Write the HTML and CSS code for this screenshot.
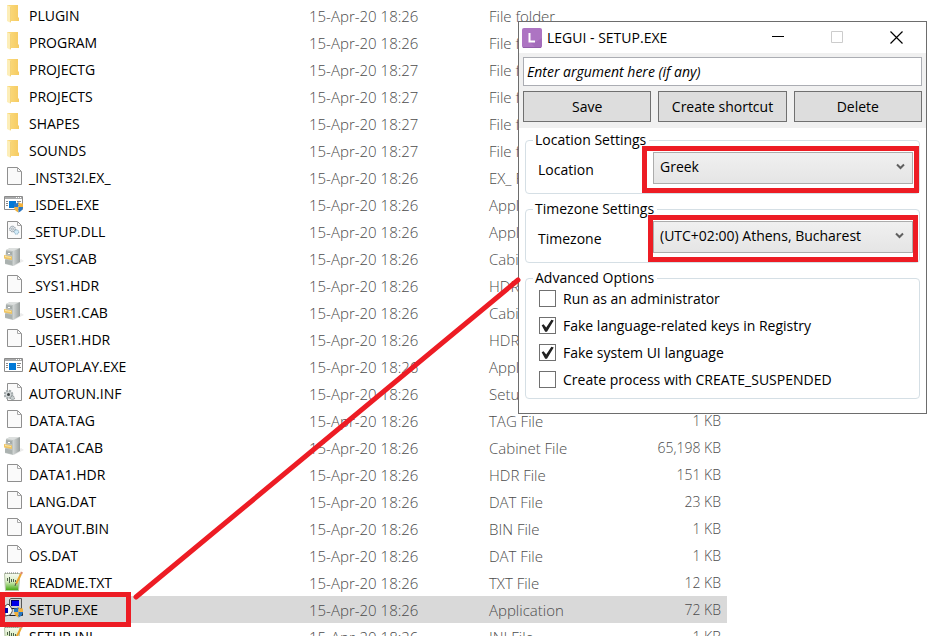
FILE: index.html
```
<!DOCTYPE html>
<html lang="en">
<head>
<meta charset="utf-8">
<title>LEGUI - SETUP.EXE</title>
<link rel="stylesheet" href="styles.css">
</head>
<body>
<svg class="sprite" aria-hidden="true">
  <defs>
    <linearGradient id="fold" x1="0" x2="1"><stop offset="0" stop-color="#fbdc80"/><stop offset="1" stop-color="#f6cb62"/></linearGradient>
    <linearGradient id="steel" x1="0" x2="1"><stop offset="0" stop-color="#d3d7d6"/><stop offset="1" stop-color="#989e9d"/></linearGradient>
    <linearGradient id="green" x1="0" x2="0" y1="0" y2="1"><stop offset="0" stop-color="#f6faf0"/><stop offset=".45" stop-color="#dcefc6"/><stop offset="1" stop-color="#3fa60c"/></linearGradient>
    <g id="sheet"><path d="M3.5 1.500H13.500L17.500 5.500V18.500H3.500Z" fill="#fafafa" stroke="#8f8f8f"/><path d="M13.500 1.500V5.500H17.500" fill="none" stroke="#a8a8a8"/></g>
    <g id="shield"><path d="M14.500 9q-2.500 2-4.500 1.500V14h4.500Z" fill="#2a78c4"/><path d="M14.500 9q2.500 2 4.500 1.500V14h-4.500Z" fill="#f3b13b"/><path d="M10 14h4.500v5.500Q10.500 18 10 14Z" fill="#f3b13b"/><path d="M19 14h-4.500v5.500Q18.500 18 19 14Z" fill="#2a78c4"/></g>
    <g id="win"><path d="M.5 3.500H18.500V16.500H.500Z" fill="#fff" stroke="#8b8b8b"/><path d="M1 4H18V6H1Z" fill="#a9aaab"/><path d="M12 4h1v1h-1zm2 0h1v1h-1zm2 0h1v1h-1z" fill="#fff"/><path d="M2 8h2v1H2zm0 2h2v1H2zm0 2h2v1H2zm11-4h4v1h-4zm0 2h3v1h-3zm0 2h4v1h-4z" fill="#888"/><path d="M5 8h7v7H5Z" fill="#0078d7"/></g>
  </defs>
  <symbol id="folder" viewBox="0 0 20 20"><path d="M3 1H14V13L15 14V17H3Z" fill="url(#fold)"/><path d="M3 1L7 3V19L3 17Z" fill="#fdeeb8"/><path d="M6.500 3V18" stroke="#f4d37a"/></symbol>
  <symbol id="file" viewBox="0 0 20 20"><use href="#sheet"/></symbol>
  <symbol id="app" viewBox="0 0 20 20"><use href="#win"/></symbol>
  <symbol id="admin" viewBox="0 0 20 20"><use href="#win"/><use href="#shield"/></symbol>
  <symbol id="dll" viewBox="0 0 20 20"><use href="#sheet"/><circle cx="8.500" cy="9" r="2.800" fill="#e3e8ec" stroke="#7e8b96" stroke-dasharray="1.500 .6"/><circle cx="8.500" cy="9" r="1" fill="#fff" stroke="#7e8b96" stroke-width=".6"/><circle cx="12.500" cy="12" r="2.200" fill="#d2ebf8" stroke="#7fa6bd" stroke-dasharray="1.200 .6"/></symbol>
  <symbol id="cab" viewBox="0 0 20 20"><path d="M9 18L17 12L20 14L10 19Z" fill="#ececec"/><path d="M2 3L6 1H16L9 4V19L1 17Z" fill="#bcc2c0"/><path d="M6 1H16L9 4L2 3Z" fill="#dde0df"/><path d="M9 4L16 1V15L9 19Z" fill="url(#steel)"/><path d="M2 4L8 5V8L2 7Z" fill="#a5acaa"/><path d="M0 8L8 9.500V13L0 11.500Z" fill="#efc563"/><path d="M1 9L7 10V11L1 10Z" fill="#fbe6a8"/><path d="M4 6h2v1H4zm0 8h2v1H4z" fill="#fff"/><path d="M1 12.500L8 14V18L1 16.500Z" fill="#abb2b0"/></symbol>
  <symbol id="inf" viewBox="0 0 20 20"><use href="#sheet"/><circle cx="4.500" cy="12.500" r="3.800" fill="#d3d8d9" stroke="#a3aaac" stroke-width="2" stroke-dasharray="2 1"/><circle cx="4.500" cy="12.500" r="1.500" fill="#3f4648"/><circle cx="8.500" cy="16" r="2" fill="#c5cbcc" stroke="#899092" stroke-dasharray="1.500 .7"/></symbol>
  <symbol id="note" viewBox="0 0 20 20"><path d="M.5 2.500H16L14.500 19.500H1.500Z" fill="url(#green)" stroke="#b4c2a8"/><path d="M1 2H15" stroke="#777" stroke-dasharray="1 1"/><path d="M3.500 7V10M5.500 6V12M7.500 8V11M9.500 8V11M11.500 9V11" stroke="#4e624a"/><path d="M17 3L12 13" stroke="#eda52b" stroke-width="2"/><path d="M16.500 1.500l2 1" stroke="#d98a70" stroke-width="2"/><path d="M12 12l-1 3" stroke="#555"/></symbol>
  <symbol id="setup" viewBox="0 0 20 20"><path d="M5.500 1.500L7 .5H17.500V10.500H5.500Z" fill="#d0d0d0" stroke="#555"/><path d="M7 2H15V8H7Z" fill="#0000e8"/><path d="M7 2H15V3H8V8H7Z" fill="#000060"/><path d="M5.500 12.500L7 10.500H17L18.500 12.500V17.500H5.500Z" fill="#d8d8d8" stroke="#222"/><path d="M1 8L4 6L6 8L8 11V14L6 17L1 18Z" fill="#fff" stroke="#222" stroke-width=".8"/><path d="M0 10H4V15H0Z" fill="#0000a8"/><path d="M4 12L7 11L8 13L5 15Z" fill="#fff"/><use href="#shield"/></symbol>
</svg>

<main class="explorer">
  <table class="files"><tbody id="rows"></tbody></table>
</main>

<section class="window" aria-label="LEGUI - SETUP.EXE">
  <header class="titlebar">
    <svg class="logo" viewBox="0 0 20 20" aria-hidden="true"><rect width="20" height="20" rx="2" fill="#ad74c2"/><path d="M8 14L14 20H18L20 18V10L14 14Z" fill="#a36bba"/><path d="M1 19.500H19" stroke="#925eaa"/><path d="M7.500 5V13.500H13" fill="none" stroke="#fff" stroke-width="2"/></svg>
    <h1 class="title">LEGUI - SETUP.EXE</h1>
    <button class="caption" aria-label="Minimize"><svg viewBox="0 0 13 13"><path d="M0 5.500H12" stroke="#000"/></svg></button>
    <button class="caption" aria-label="Maximize" disabled><svg viewBox="0 0 13 13"><path d="M.5.500H11.500V11.500H.500Z" fill="none" stroke="#ccc"/></svg></button>
    <button class="caption" aria-label="Close"><svg viewBox="0 0 13 13"><path d="M.5.500L12.500 12.500M12.500.500L.500 12.500" stroke="#000" stroke-width="1.200"/></svg></button>
  </header>
  <div class="toolbar">
    <input class="argument" type="text" aria-label="Argument" placeholder="Enter argument here (if any)">
    <div class="actions">
      <button class="action">Save</button>
      <button class="action">Create shortcut</button>
      <button class="action">Delete</button>
    </div>
  </div>
  <form class="settings">
    <fieldset class="group">
      <legend>Location Settings</legend>
      <div class="field">
        <label for="location">Location</label>
        <div class="pick location"><select id="location"><option>Greek</option></select><svg class="chevron" viewBox="0 0 9 7"><path d="M1 1.500L4.500 5L8 1.500" fill="none" stroke="#606060" stroke-width="2"/></svg></div>
      </div>
    </fieldset>
    <fieldset class="group">
      <legend>Timezone Settings</legend>
      <div class="field">
        <label for="timezone">Timezone</label>
        <div class="pick timezone"><select id="timezone"><option>(UTC+02:00) Athens, Bucharest</option></select><svg class="chevron" viewBox="0 0 9 7"><path d="M1 1.500L4.500 5L8 1.500" fill="none" stroke="#606060" stroke-width="2"/></svg></div>
      </div>
    </fieldset>
    <fieldset class="group options">
      <legend>Advanced Options</legend>
      <div class="checks">
        <label class="check"><input type="checkbox">Run as an administrator</label>
        <label class="check"><input type="checkbox" checked>Fake language-related keys in Registry</label>
        <label class="check"><input type="checkbox" checked>Fake system UI language</label>
        <label class="check"><input type="checkbox">Create process with CREATE_SUSPENDED</label>
      </div>
    </fieldset>
  </form>
</section>

<svg class="pointer" viewBox="0 0 388 324" aria-hidden="true"><path d="M3 320L385 3" stroke="#ed1c24" stroke-width="5" stroke-linecap="round"/></svg>
<script src="files.js"></script>
</body>
</html>
```
FILE: styles.css
```
*, *::before, *::after { box-sizing: border-box; }
body {
  margin: 0;
  height: 100vh;
  overflow: hidden;
  position: relative;
  background: #fff;
  color: #000;
  font: 14px/20px "Open Sans", "Noto Sans", sans-serif;
}
button, input, select { font: inherit; color: inherit; border-radius: 0; }
.sprite { position: absolute; width: 0; height: 0; }

.explorer { padding-top: 2px; }
.files { width: 727px; border-collapse: collapse; table-layout: fixed; }
.files tr { height: 27px; }
.files td { padding: 0; color: #4c4c4c; white-space: nowrap; font-weight: 300; }
.files .name { width: 309px; color: #000; font-weight: 400; }
.files .date { width: 180px; font-size: 15px; }
.files .type { font-size: 15px; }
.files .size { width: 120px; padding-right: 6px; text-align: right; }
.files .selected td { background: #d9d9d9; }
.entry { display: flex; align-items: center; gap: 5px; padding-left: 4px; }
.entry svg { width: 20px; height: 20px; flex: none; margin-bottom: 3px; }
.mark { position: relative; }
.mark::after {
  content: "";
  position: absolute;
  inset: -6px auto -6px 0;
  width: 131px;
  border: 5px solid #ed1c24;
}

.window {
  position: absolute;
  top: 21px;
  right: 13px;
  width: 409px;
  background: #fff;
  border: 1px solid #6d6d6d;
}
.titlebar { display: flex; align-items: center; height: 31px; padding-left: 3px; }
.logo { width: 20px; height: 20px; }
.title { flex: 1; margin: 0 0 0 5px; font-size: 14px; font-weight: 400; }
.caption { display: grid; place-items: center; width: 59px; height: 31px; padding: 0; border: 0; background: none; }
.caption svg { width: 13px; height: 13px; }
.toolbar { display: grid; gap: 5px; padding: 4px 4px 6px; background: #f0f0f0; }
.argument { width: 100%; height: 29px; padding: 0 3px; border: 1px solid #abadb3; background: #fff; font-style: italic; }
.argument::placeholder { color: #000; opacity: 1; }
.actions { display: grid; grid-template-columns: repeat(3, 1fr); gap: 7px; }
.action { height: 31px; padding: 0; border: 1px solid #707070; background: #ddd; }
.settings { display: grid; gap: 5px; padding: 2px 6px 14px; }
.group { min-width: 0; margin: 0; padding: 0; border: 1px solid #d5dfe5; border-radius: 4px; }
.group legend { margin-left: 7px; padding: 0 3px 0 2px; }
.field { display: flex; align-items: center; height: 43px; padding: 0 0 4px 12px; }
.field label { flex: 1; }
.pick { position: relative; border: 5px solid #ed1c24; background: #fff; }
.pick select { display: block; width: 100%; height: 32px; padding: 0 6px 2px; appearance: none; border: 1px solid #acacac; background: linear-gradient(#f0f0f0, #e5e5e5); }
.location { width: 277px; padding: 1px 1px 4px 6px; }
.timezone { width: 270px; margin-right: 1px; padding: 1px 0 4px; }
.chevron { position: absolute; right: 9px; top: 12px; width: 9px; height: 7px; }
.checks { margin-top: -3px; padding: 0 0 5px 13px; }
.check { display: flex; align-items: center; gap: 7px; height: 27px; }
.check input {
  appearance: none;
  display: grid;
  place-items: center;
  width: 17px;
  height: 17px;
  margin: 0;
  border: 1px solid #707070;
  background: #fff;
}
.check input:checked::before {
  content: "";
  width: 13px;
  height: 13px;
  background: #212121;
  clip-path: polygon(5% 48%, 20% 40%, 40% 66%, 80% 5%, 98% 12%, 46% 98%, 32% 98%);
}
.pointer { position: absolute; left: 133px; top: 277px; width: 388px; height: 324px; pointer-events: none; }
```
FILE: files.js
```
const files = [
  ["folder", "PLUGIN", "26", "File folder", ""],
  ["folder", "PROGRAM", "26", "File folder", ""],
  ["folder", "PROJECTG", "27", "File folder", ""],
  ["folder", "PROJECTS", "27", "File folder", ""],
  ["folder", "SHAPES", "27", "File folder", ""],
  ["folder", "SOUNDS", "27", "File folder", ""],
  ["file", "_INST32I.EX_", "26", "EX_ File", ""],
  ["admin", "_ISDEL.EXE", "26", "Application", ""],
  ["dll", "_SETUP.DLL", "26", "Application", ""],
  ["cab", "_SYS1.CAB", "26", "Cabinet File", ""],
  ["file", "_SYS1.HDR", "26", "HDR File", ""],
  ["cab", "_USER1.CAB", "26", "Cabinet File", ""],
  ["file", "_USER1.HDR", "26", "HDR File", ""],
  ["app", "AUTOPLAY.EXE", "26", "Application", ""],
  ["inf", "AUTORUN.INF", "26", "Setup", ""],
  ["file", "DATA.TAG", "26", "TAG File", "1 KB"],
  ["cab", "DATA1.CAB", "26", "Cabinet File", "65,198 KB"],
  ["file", "DATA1.HDR", "26", "HDR File", "151 KB"],
  ["file", "LANG.DAT", "26", "DAT File", "23 KB"],
  ["file", "LAYOUT.BIN", "26", "BIN File", "1 KB"],
  ["file", "OS.DAT", "26", "DAT File", "1 KB"],
  ["note", "README.TXT", "26", "TXT File", "12 KB"],
  ["setup", "SETUP.EXE", "26", "Application", "72 KB"],
  ["note", "SETUP.INI", "26", "INI File", "1 KB"]
];
document.getElementById("rows").innerHTML = files.map(([icon, name, minute, type, size]) => {
  const selected = name === "SETUP.EXE";
  return `<tr${selected ? ' class="selected"' : ""}>
    <td class="name"><div class="entry${selected ? " mark" : ""}"><svg aria-hidden="true"><use href="#${icon}"/></svg>${name}</div></td>
    <td class="date">15-Apr-20 18:${minute}</td><td class="type">${type}</td><td class="size">${size}</td></tr>`;
}).join("");
```
